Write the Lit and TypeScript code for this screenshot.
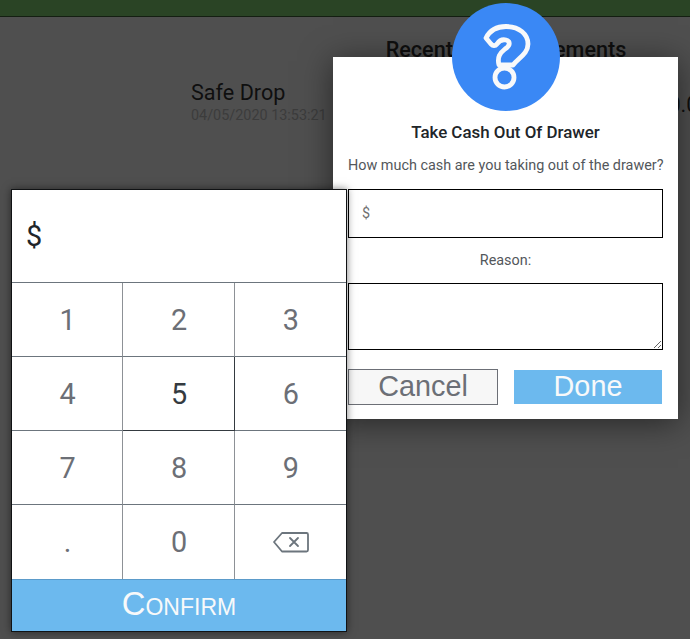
import { LitElement, css, html } from 'lit';
import { customElement } from 'lit/decorators.js';

const KEYS = ['1', '2', '3', '4', '5', '6', '7', '8', '9', '.', '0', 'back'];

@customElement('app-root')
export class AppRoot extends LitElement {
  renderKey(key: string) {
    if (key === 'back') {
      return html`<button class="key">
        <svg width="36" height="22" viewBox="0 0 36 22" fill="none" stroke="#6c757d" stroke-width="1.8" stroke-linejoin="round" stroke-linecap="round">
          <path d="M9 2H33.5a1.5 1.5 0 0 1 1.5 1.5V19a1.5 1.5 0 0 1-1.5 1.5H9L1 11Z" />
          <path d="M17 7L25 15M25 7L17 15" />
        </svg>
      </button>`;
    }
    return html`<button class=${key === '5' ? 'key hover' : 'key'}>${key}</button>`;
  }

  render() {
    return html`
      <div class="topbar"></div>
      <main class="page">
        <h2>Recent Cash Movements</h2>
        <div class="row">
          <div class="info">
            <div class="name">Safe Drop</div>
            <div class="date">04/05/2020 13:53:21</div>
          </div>
          <div class="amount">$100.00</div>
        </div>
      </main>

      <section class="modal">
        <div class="badge">
          <svg width="108" height="108" viewBox="0 0 108 108" fill="none" stroke="#f8f9fa" stroke-width="4.8" stroke-linejoin="round" stroke-linecap="round">
            <path d="M34 35C38 27 46 23.5 54 23.5C67 23.5 76 31 76 41C76 51 66 55 61 62L47 62C45 54 48 50 53 46C59 42 58 38 54 37C50 36 47 38 45 41C43 43.5 41 43 39 41Z" />
            <circle cx="52.5" cy="74.5" r="9.5" />
          </svg>
        </div>
        <h3>Take Cash Out Of Drawer</h3>
        <p class="question">How much cash are you taking out of the drawer?</p>
        <div class="money"><span>$</span></div>
        <label class="reason">Reason:</label>
        <textarea></textarea>
        <div class="actions">
          <button class="cancel">Cancel</button>
          <button class="done">Done</button>
        </div>
      </section>

      <section class="pad">
        <div class="display">$</div>
        <div class="keys">${KEYS.map((k) => this.renderKey(k))}</div>
        <button class="confirm">Confirm</button>
      </section>
    `;
  }

  static styles = css`
    :host {
      display: block;
      position: relative;
      height: 639px;
      overflow: hidden;
      background: #4f4f4f;
      font-family: Roboto, sans-serif;
    }

    .topbar {
      height: 16px;
      background: #2a4425;
      border-bottom: 1px solid #141f12;
    }

    .page {
      color: #0f0f0f;
    }

    h2 {
      margin: 0;
      padding: 21px 0 0 322px;
      text-align: center;
      font-size: 21.6px;
      font-weight: 500;
      line-height: 24px;
    }

    .row {
      display: flex;
      padding: 18px 0 0 191px;
    }

    .info {
      width: 486px;
      flex: none;
    }

    .name {
      font-size: 21.6px;
      line-height: 26px;
    }

    .date {
      margin-top: 2px;
      font-size: 14.4px;
      line-height: 16px;
      color: #3c3c3c;
    }

    .amount {
      margin: 12px 0 0 -45px;
      font-size: 21.6px;
      line-height: 26px;
      white-space: nowrap;
    }

    .modal {
      position: absolute;
      left: 333px;
      top: 57px;
      width: 345px;
      height: 362px;
      box-sizing: border-box;
      padding: 66px 15px 0;
      background: #fff;
      box-shadow: 0 4px 30px rgba(0, 0, 0, 0.5);
      text-align: center;
      color: #212529;
    }

    .badge {
      position: absolute;
      left: 119px;
      top: -54px;
      width: 108px;
      height: 108px;
      border-radius: 50%;
      background: #3a88f5;
    }

    .badge svg {
      display: block;
    }

    h3 {
      margin: 0;
      font-size: 16.9px;
      font-weight: 500;
      line-height: 19px;
    }

    .question {
      margin: 14px 0 0;
      font-size: 14.4px;
      line-height: 19px;
      white-space: nowrap;
      color: #53575b;
    }

    .money {
      margin-top: 14px;
      height: 49px;
      box-sizing: border-box;
      border: 1px solid #000;
      padding-left: 13px;
      display: flex;
      align-items: center;
      font-size: 14.4px;
      color: #707070;
    }

    .reason {
      display: block;
      margin-top: 15px;
      font-size: 14.4px;
      line-height: 16px;
      color: #53575b;
    }

    textarea {
      display: block;
      width: 100%;
      height: 67px;
      margin: 14px 0 0;
      padding: 0;
      box-sizing: border-box;
      border: 1px solid #000;
      border-radius: 0;
      outline: none;
      background: #fff;
    }

    .actions {
      display: flex;
      justify-content: space-between;
      align-items: center;
      margin-top: 19px;
    }

    .actions button {
      font-family: 'Liberation Sans', Arial, sans-serif;
      font-size: 28.8px;
      padding: 0 0 2px;
      line-height: 30px;
    }

    .cancel {
      width: 150px;
      height: 36px;
      border: 1px solid #6c6f76;
      background: #f7f7f7;
      color: #6c6f76;
    }

    .done {
      width: 148px;
      height: 34px;
      margin-right: 1px;
      border: none;
      background: #6cb9ee;
      color: #f8f9fa;
    }

    .pad {
      position: absolute;
      left: 11px;
      top: 189px;
      width: 336px;
      height: 443px;
      box-sizing: border-box;
      border: 1px solid #101214;
      background: #fff;
      box-shadow: 0 0 8px rgba(0, 0, 0, 0.5);
      display: flex;
      flex-direction: column;
    }

    .display {
      height: 93px;
      flex: none;
      box-sizing: border-box;
      padding-left: 14px;
      display: flex;
      align-items: center;
      font-size: 28.8px;
      color: #212529;
      border-bottom: 1px solid #6c757d;
    }

    .keys {
      flex: 1;
      display: grid;
      grid-template-columns: repeat(3, 1fr);
      grid-template-rows: repeat(4, 1fr);
    }

    .key {
      margin: 0;
      padding: 0 0 0 1px;
      background: #fff;
      border: none;
      border-right: 1px solid #8d9196;
      border-bottom: 1px solid #6c757d;
      font-family: Roboto, sans-serif;
      font-size: 28.8px;
      color: #6c6f76;
      display: flex;
      align-items: center;
      justify-content: center;
    }

    .key:nth-child(3n) {
      border-right: none;
    }

    .key:nth-last-child(-n + 3) {
      border-bottom: none;
    }

    .key.hover {
      color: #343a40;
      border-right-color: #343a40;
      border-bottom-color: #343a40;
    }

    .confirm {
      height: 52px;
      flex: none;
      border: none;
      border-top: 1px solid #5b9bca;
      padding: 0 0 4px;
      background: #6cb9ee;
      color: #f8f9fa;
      font-family: 'Liberation Sans', Arial, sans-serif;
      font-size: 32.8px;
      font-variant: small-caps;
    }
  `;
}

declare global {
  interface HTMLElementTagNameMap {
    'app-root': AppRoot;
  }
}
